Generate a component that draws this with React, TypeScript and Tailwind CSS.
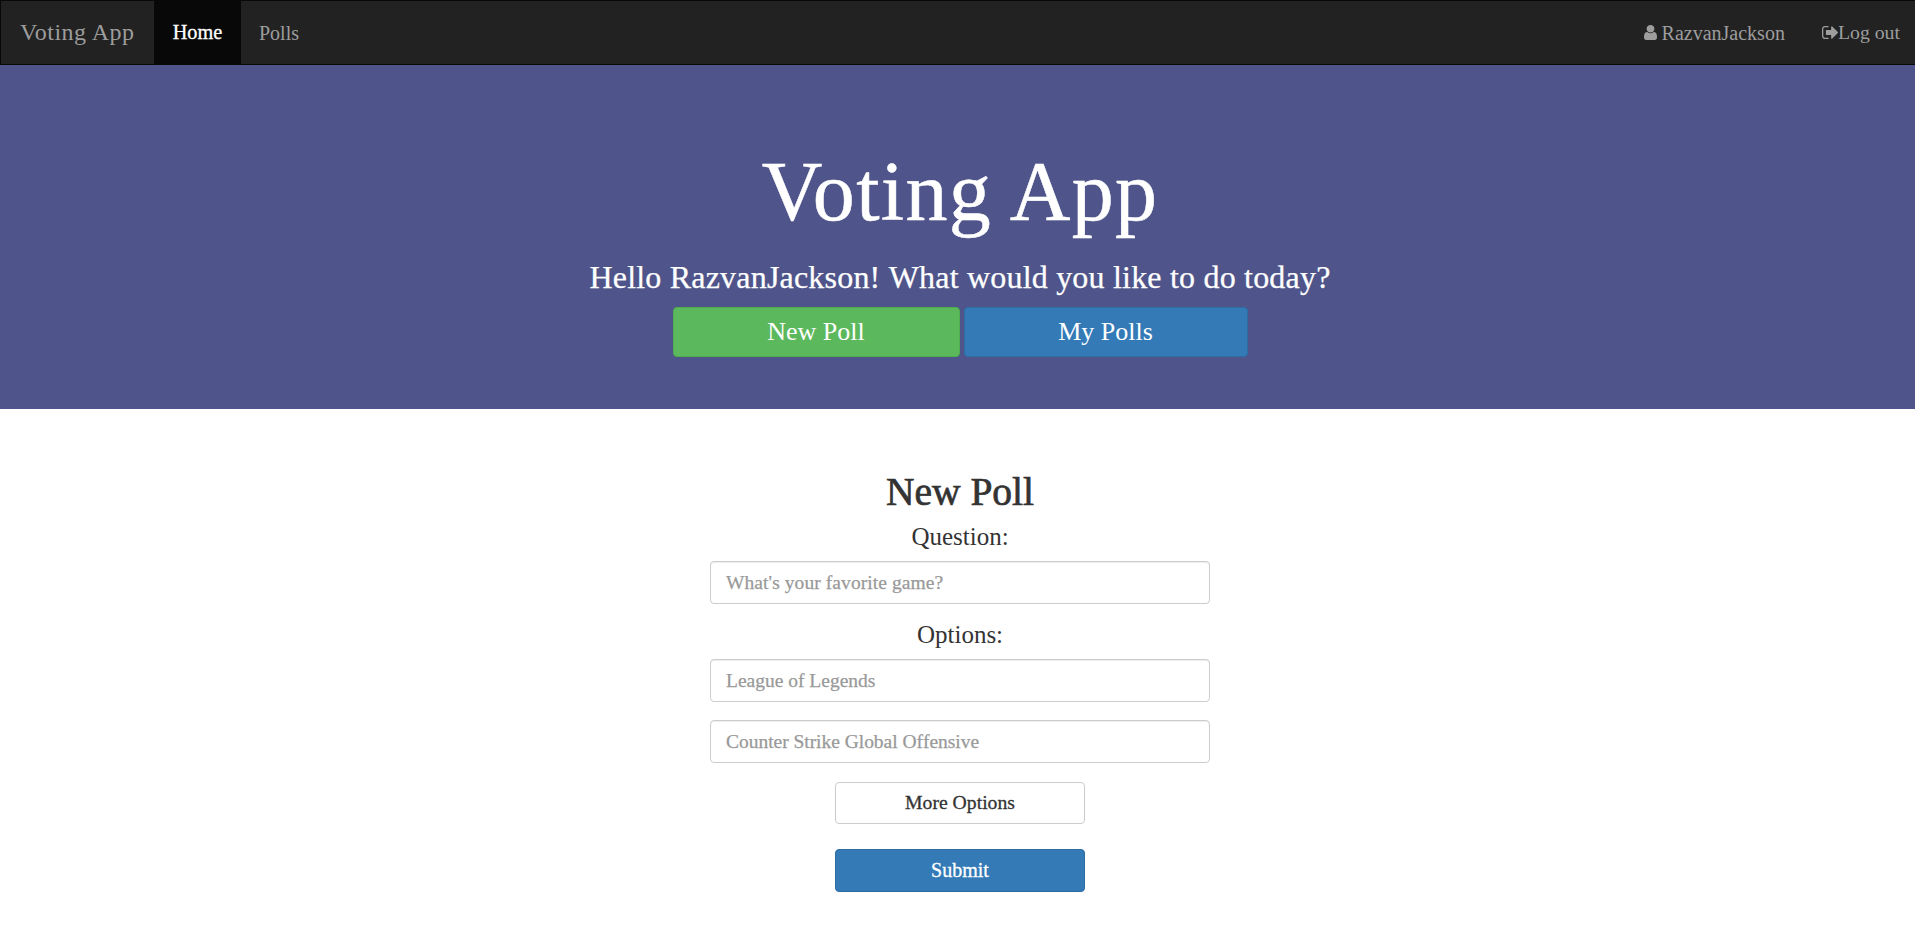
import React from "react";

function UserIcon() {
  return (
    <svg viewBox="256 128 1280 1536" className="h-[15px] w-[13px] shrink-0" fill="currentColor" preserveAspectRatio="none">
      <path d="M1536 1399q0 109-62.5 187t-150.5 78h-854q-88 0-150.5-78t-62.5-187q0-85 8.5-160.5t31.5-152 58.5-131 94-89 134.5-34.5q131 128 313 128t313-128q76 0 134.5 34.5t94 89 58.5 131 31.5 152 8.5 160.5zm-256-887q0 159-112.5 271.5t-271.5 112.5-271.5-112.5-112.5-271.5 112.5-271.5 271.5-112.5 271.5 112.5 112.5 271.5z" />
    </svg>
  );
}

function SignOutIcon() {
  return (
    <svg viewBox="64 256 1568 1280" className="h-[13px] w-4 shrink-0" fill="currentColor" preserveAspectRatio="none">
      <path d="M704 1440q0 4 1 20t.5 26.5-3 23.5-10 19.5-20.5 6.5h-320q-119 0-203.5-84.5t-84.5-203.5v-704q0-119 84.5-203.5t203.5-84.5h320q13 0 22.5 9.5t9.5 22.5q0 4 1 20t.5 26.5-3 23.5-10 19.5-20.5 6.5h-320q-66 0-113 47t-47 113v704q0 66 47 113t113 47h312l11.5 1 11.5 3 8 5.5 7 9 2 13.5zm928-544q0 26-19 45l-544 544q-19 19-45 19t-45-19-19-45v-288h-448q-26 0-45-19t-19-45v-384q0-26 19-45t45-19h448v-288q0-26 19-45t45-19 45 19l544 544q19 19 19 45z" />
    </svg>
  );
}

function Field({ placeholder, className }: { placeholder: string; className: string }) {
  return (
    <input
      type="text"
      placeholder={placeholder}
      className={`block h-[43px] w-[500px] rounded-[4px] border border-[#ccc] bg-white px-[15px] text-[19.5px] text-[#555] [-webkit-text-stroke:0.25px] shadow-[inset_0_1px_1px_rgba(0,0,0,0.075)] outline-none placeholder:text-[#999] placeholder:opacity-100 ${className}`}
    />
  );
}

export default function App() {
  return (
    <div className="h-[947px] overflow-hidden bg-white font-['Liberation_Serif',serif] text-[#333] [font-kerning:none]">
      <nav className="flex h-[65px] justify-between border border-r-0 border-[#080808] bg-[#222] text-[20px] text-[#9d9d9d]">
        <div className="flex">
          <a href="#" className="flex w-[153px] items-center pb-px pl-[19px] text-[24px] tracking-[0.5px] whitespace-nowrap [font-kerning:normal]">Voting App</a>
          <a href="#" className="flex w-[87px] items-center justify-center bg-[#080808] text-[20.3px] text-white [-webkit-text-stroke:0.3px]">Home</a>
          <a href="#" className="flex items-center pl-[18px] text-[20px]">Polls</a>
        </div>
        <div className="flex pr-[15px]">
          <a href="#" className="mr-[37px] flex items-center gap-[5px]"><UserIcon />RazvanJackson</a>
          <a href="#" className="flex items-center text-[19.8px]"><SignOutIcon />Log out</a>
        </div>
      </nav>

      <header className="flex h-[344px] flex-col items-center bg-[#4f558a] pt-[77px] pl-[5px] text-white">
        <h1 className="h-[100px] text-[84px] leading-[100px] tracking-[1.3px] [-webkit-text-stroke:0.5px] [font-kerning:normal]">Voting App</h1>
        <p className="mt-[15px] h-10 text-[32px] leading-10 tracking-[0.2px] [-webkit-text-stroke:0.25px]">Hello RazvanJackson! What would you like to do today?</p>
        <div className="mt-[10px] flex gap-1 text-[26px]">
          <button className="h-[50px] w-[287px] rounded-[4px] border border-[#4cae4c] bg-[#5cb85c] pb-[2px]">New Poll</button>
          <button className="h-[50px] w-[284px] rounded-[4px] border border-[#2e6da4] bg-[#337ab7] pb-[2px]">My Polls</button>
        </div>
      </header>

      <main className="flex flex-col items-center pt-[58px] pl-[5px]">
        <h2 className="h-[50px] text-[39.5px] leading-[50px] [-webkit-text-stroke:0.7px_#333]">New Poll</h2>
        <label className="mt-[5px] h-[30px] text-[25px] leading-[30px]">Question:</label>
        <Field placeholder="What's your favorite game?" className="mt-[9px] tracking-[0.08px]" />
        <label className="mt-4 h-[30px] text-[25px] leading-[30px]">Options:</label>
        <Field placeholder="League of Legends" className="mt-[9px]" />
        <Field placeholder="Counter Strike Global Offensive" className="mt-[18px] tracking-[-0.03px]" />
        <button className="mt-[19px] h-[42px] w-[250px] rounded-[4px] border border-[#ccc] bg-white text-[19.7px] [-webkit-text-stroke:0.3px]">More Options</button>
        <button className="mt-[25px] h-[43px] w-[250px] rounded-[4px] border border-[#2e6da4] bg-[#337ab7] pb-[2px] text-[20px] text-white [-webkit-text-stroke:0.3px]">Submit</button>
      </main>
    </div>
  );
}
